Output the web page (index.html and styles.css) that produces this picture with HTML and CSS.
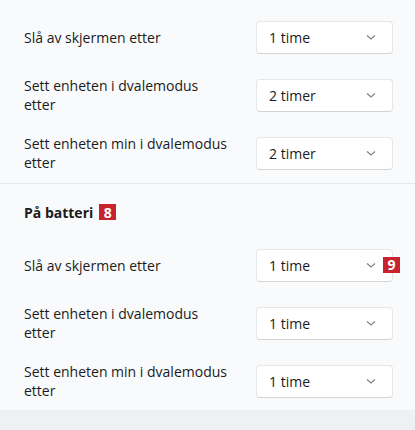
FILE: index.html
```html
<!DOCTYPE html>
<html>
<head>
    <title>Strøm</title>
    <link rel="stylesheet" href="styles.css">
</head>
<body>
    <div class="section first">
        <div class="row">
            <div class="label">Slå av skjermen etter</div>
            <div class="dropdown"><span>1 time</span><svg class="chev" width="10" height="6" viewBox="0 0 10 6"><path d="M1 1.5l4 3.5 4-3.5" fill="none" stroke="#808080" stroke-width="1.1"/></svg></div>
        </div>
        <div class="row">
            <div class="label">Sett enheten i dvalemodus<br>etter</div>
            <div class="dropdown"><span>2 timer</span><svg class="chev" width="10" height="6" viewBox="0 0 10 6"><path d="M1 1.5l4 3.5 4-3.5" fill="none" stroke="#808080" stroke-width="1.1"/></svg></div>
        </div>
        <div class="row">
            <div class="label">Sett enheten min i dvalemodus<br>etter</div>
            <div class="dropdown"><span>2 timer</span><svg class="chev" width="10" height="6" viewBox="0 0 10 6"><path d="M1 1.5l4 3.5 4-3.5" fill="none" stroke="#808080" stroke-width="1.1"/></svg></div>
        </div>
    </div>

    <div class="section second">
        <div class="heading">På batteri <span class="badge">8</span></div>
        <div class="row">
            <div class="label">Slå av skjermen etter</div>
            <div class="dropdown"><span>1 time</span><svg class="chev" width="10" height="6" viewBox="0 0 10 6"><path d="M1 1.5l4 3.5 4-3.5" fill="none" stroke="#808080" stroke-width="1.1"/></svg><span class="badge over">9</span></div>
        </div>
        <div class="row">
            <div class="label">Sett enheten i dvalemodus<br>etter</div>
            <div class="dropdown"><span>1 time</span><svg class="chev" width="10" height="6" viewBox="0 0 10 6"><path d="M1 1.5l4 3.5 4-3.5" fill="none" stroke="#808080" stroke-width="1.1"/></svg></div>
        </div>
        <div class="row">
            <div class="label">Sett enheten min i dvalemodus<br>etter</div>
            <div class="dropdown"><span>1 time</span><svg class="chev" width="10" height="6" viewBox="0 0 10 6"><path d="M1 1.5l4 3.5 4-3.5" fill="none" stroke="#808080" stroke-width="1.1"/></svg></div>
        </div>
    </div>
    <div class="footer"></div>
</body>
</html>
```

FILE: styles.css
```css
body {
    margin: 0;
    font-family: "Open Sans", "Noto Sans", sans-serif;
    font-size: 14px;
    color: #1b1b1b;
    background-color: #eef0f3;
}

.section {
    background-color: #f9fafb;
    padding: 0 22px 0 24px;
}

.first {
    padding-top: 8px;
    height: 175px;
    border-bottom: 1px solid #e4e6e9;
}

.second {
    padding-top: 18px;
    height: 208px;
}

.row {
    display: grid;
    grid-template-columns: 1fr 137px;
    align-items: center;
    height: 58px;
}

.label {
    line-height: 19px;
}

.heading {
    display: flex;
    align-items: center;
    font-weight: bold;
    height: 20px;
    margin-bottom: 14px;
}

.badge {
    display: inline-flex;
    align-items: center;
    justify-content: center;
    width: 17px;
    height: 16px;
    margin-left: 6px;
    background-color: #c8232c;
    color: white;
    font-weight: bold;
    font-size: 14px;
}

.dropdown {
    position: relative;
    display: flex;
    align-items: center;
    justify-content: space-between;
    height: 31px;
    padding: 0 16px 0 12px;
    background-color: white;
    border: 1px solid #e6e6e6;
    border-bottom-color: #d4d4d4;
    border-radius: 4px;
}

.badge.over {
    position: absolute;
    right: -8px;
    top: 7px;
    margin: 0;
}
```
